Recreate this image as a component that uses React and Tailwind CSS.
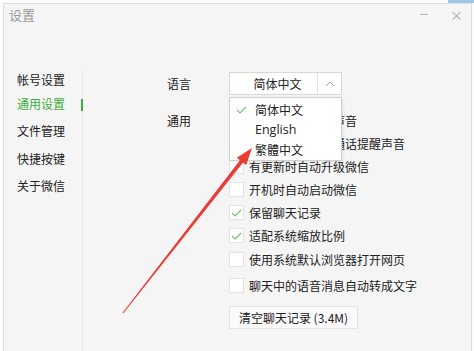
import React from "react";

const menu = ["帐号设置", "通用设置", "文件管理", "快捷按键", "关于微信"];

const options = [
  { label: "开启新消息提醒声音", checked: false, h: "h-[23px]" },
  { label: "开启语音和视频通话提醒声音", checked: false, h: "h-[23px]" },
  { label: "有更新时自动升级微信", checked: false, h: "h-[23px]" },
  { label: "开机时自动启动微信", checked: false, h: "h-[23px]" },
  { label: "保留聊天记录", checked: true, h: "h-[23px]" },
  { label: "适配系统缩放比例", checked: true, h: "h-[23px]" },
  { label: "使用系统默认浏览器打开网页", checked: false, h: "h-[23px] mt-[1px]" },
  { label: "聊天中的语音消息自动转成文字", checked: false, h: "h-[23px] mt-[3px]" },
];

function Check({ className = "" }) {
  return (
    <svg width="11" height="8" viewBox="0 0 11 8" className={className}>
      <path d="M1 4 L4 7 L10 1" fill="none" stroke="#6cc46a" strokeWidth="1.1" />
    </svg>
  );
}

function Checkbox({ checked }) {
  return (
    <div className="w-[15px] h-[15px] border border-[#e3e3e3] bg-white flex items-center justify-center shrink-0">
      {checked && <Check />}
    </div>
  );
}

export default function App() {
  return (
    <div
      className="relative w-[474px] h-[351px] overflow-hidden bg-[#fcfcfc] text-[12px] text-[#222]"
      style={{ fontFamily: '"Noto Sans CJK SC", "Noto Sans", sans-serif' }}
    >
      <div className="absolute right-0 top-0 w-[26px] h-[3px] bg-[#9fc5e8]" />
      <div className="ml-[3px] mt-[3px] mr-[2px] h-[348px] border-l border-t border-r border-[#dcdcdc] bg-[#f5f5f5] flex flex-col">
        {/* title bar */}
        <div className="h-[21px] flex items-center pl-[5px] pr-[8px] text-[#9a9a9a]">
          <span className="text-[13px]">设置</span>
          <span className="ml-auto w-[8px] h-px bg-[#b5b5b5]" />
          <span className="ml-[22px] text-[13px] leading-none text-[#a5a5a5]">×</span>
        </div>

        <div className="flex flex-1">
          {/* sidebar */}
          <div className="w-[79px] mt-[45px] border-r border-[#e6e6e6] pl-[13px]">
            {menu.map((m, i) => (
              <div
                key={m}
                className={`relative flex items-center ${i === 0 ? "h-[20px]" : "h-[27.5px]"} ${
                  i === 1 ? "text-[#3daf3a]" : "text-[#222]"
                }`}
              >
                {m}
                {i === 1 && <span className="absolute right-[-1px] top-[9px] w-[2px] h-[12px] bg-[#3daf3a]" />}
              </div>
            ))}
          </div>

          {/* content */}
          <div className="relative flex-1 pl-[84px] pt-[47px]">
            <div className="flex items-center">
              <div className="w-[62px]">语言</div>
              <div className="w-[113px] h-[23px] border border-[#d8d8d8] bg-white flex">
                <div className="flex-1 flex items-center justify-center pl-[8px]">简体中文</div>
                <div className="w-[24px] border-l border-[#e2e2e2] flex items-center justify-center">
                  <svg width="10" height="6" viewBox="0 0 10 6">
                    <path d="M1 5 L5 1 L9 5" fill="none" stroke="#aaa" strokeWidth="1" />
                  </svg>
                </div>
              </div>
            </div>

            <div className="flex mt-[14px]">
              <div className="w-[62px] h-[23px] flex items-center">通用</div>
              <div className="flex flex-col">
                {options.map((o) => (
                  <div key={o.label} className={`flex items-center gap-[5px] ${o.h}`}>
                    <Checkbox checked={o.checked} />
                    <span>{o.label}</span>
                  </div>
                ))}
                <button className="mt-[9px] w-[129px] h-[23px] border border-[#e3e3e3] bg-[#fafafa] text-[12px] text-[#222] flex items-center justify-center">
                  清空聊天记录 (3.4M)
                </button>
              </div>
            </div>

            {/* open language menu */}
            <div className="absolute left-[146px] top-[72px] w-[113px] h-[64px] border border-[#cfcfcf] bg-white shadow-[1px_1px_3px_rgba(0,0,0,0.08)] flex flex-col pt-[1px]">
              <div className="h-[21px] flex items-center">
                <Check className="ml-[6px] mr-[8px]" />
                <span>简体中文</span>
              </div>
              <div className="h-[20px] flex items-center pl-[25px] text-[12.5px]" style={{ fontFamily: '"Open Sans", "Noto Sans", sans-serif' }}>
                English
              </div>
              <div className="h-[20px] flex items-center pl-[25px]">繁體中文</div>
            </div>
          </div>
        </div>
      </div>

      {/* red arrow */}
      <svg className="absolute left-0 top-0 pointer-events-none" width="474" height="351" viewBox="0 0 474 351">
        <polygon
          points="123.4,313.3 243.1,162.6 246.2,165.1 252,148 236.8,157.7 239.9,160.2 122.6,312.7"
          fill="#ec3a35"
        />
      </svg>
    </div>
  );
}
